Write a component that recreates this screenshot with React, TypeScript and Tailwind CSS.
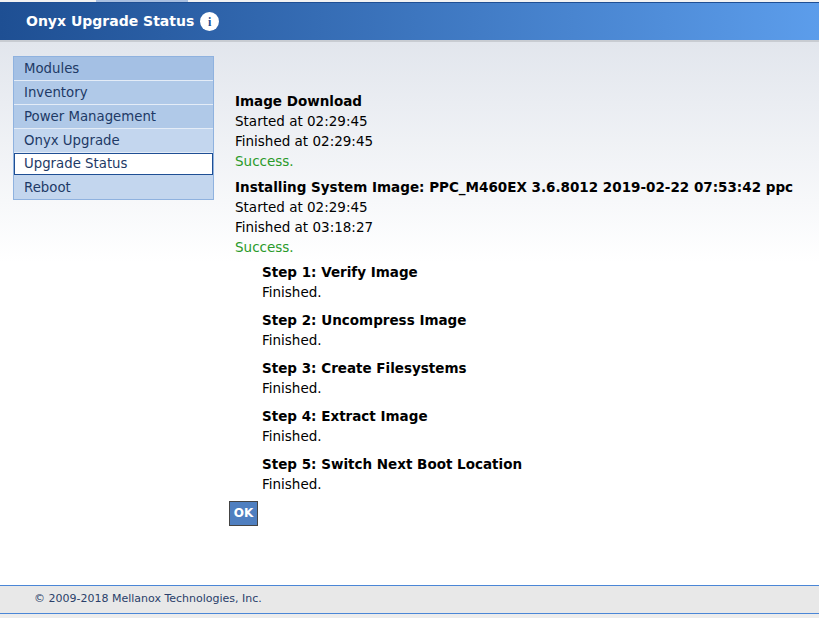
export default function App() {
  const menu = ["Modules", "Inventory", "Power Management", "Onyx Upgrade", "Upgrade Status", "Reboot"]
  const steps = ["Verify Image", "Uncompress Image", "Create Filesystems", "Extract Image", "Switch Next Boot Location"]
  return (
    <div className="w-[819px] h-[632px] bg-white text-[13px] text-black" style={{ fontFamily: '"DejaVu Sans", Verdana, sans-serif' }}>
      <div className="h-[3px] bg-[#f2f2f2] border-b border-[#1f4f94] flex">
        <div className="ml-[96px] w-[92px] bg-[#a9bfe0]" />
      </div>
      <div className="h-[37px] bg-gradient-to-r from-[#1e4f93] to-[#5c9deb] flex items-center pl-[26px] gap-[6px]">
        <span className="text-white font-bold text-[14px]">Onyx Upgrade Status</span>
        <span className="w-[19px] h-[19px] rounded-full bg-white text-[#1e4f93] flex items-center justify-center text-[12px] font-bold" style={{ fontFamily: '"Liberation Serif", serif' }}>i</span>
      </div>
      <div className="h-[2px] bg-[#c8ccd2]" />
      <div className="h-[543px] flex" style={{ backgroundImage: "linear-gradient(#e2e6ed, #ffffff 220px)" }}>
        <div className="ml-[13px] mt-[14px] w-[201px] self-start border border-[#8fb2df] bg-[#c3d6ee] text-[13.3px]">
          {menu.map((m, i) =>
            m === "Upgrade Status" ? (
              <div key={m} className="h-[22px] bg-white border border-[#1f4f94] text-[#1e3a66] pl-[9px] flex items-center">{m}</div>
            ) : (
              <div key={m} className={`h-[24px] pl-[10px] pt-[1px] flex items-center text-[#1e3a66] ${i < 5 ? "border-b border-[#e4ecf7]" : ""} ${i === 0 ? "bg-[#a4c0e4]" : i < 3 ? "bg-[#b0c9e8]" : "bg-[#c3d6ee]"}`}>{m}</div>
            )
          )}
        </div>
        <div className="ml-[21px] mt-[49px] leading-[20px] text-[13.5px]">
          <div className="font-bold">Image Download</div>
          <div>Started at 02:29:45</div>
          <div>Finished at 02:29:45</div>
          <div className="text-[#2a9a2a]">Success.</div>
          <div className="font-bold mt-[6px]">Installing System Image: PPC_M460EX 3.6.8012 2019-02-22 07:53:42 ppc</div>
          <div>Started at 02:29:45</div>
          <div>Finished at 03:18:27</div>
          <div className="text-[#2a9a2a]">Success.</div>
          <div className="pl-[27px] mt-[5px]">
            {steps.map((s, i) => (
              <div key={s} className="mb-[8px]">
                <div className="font-bold">Step {i + 1}: {s}</div>
                <div>Finished.</div>
              </div>
            ))}
          </div>
          <button className="-ml-[6px] -mt-[3px] w-[29px] h-[25px] bg-[#4f7fc0] border border-[#444] text-white font-bold text-[12px]">OK</button>
        </div>
      </div>
      <div className="h-[29px] bg-[#e8e8e8] border-t border-b border-[#4a86d6] flex items-center pl-[34px] text-[11px] text-[#2a3f6a]">
        © 2009-2018 Mellanox Technologies, Inc.
      </div>
      <div className="h-[4px] bg-[#ececec]" />
    </div>
  )
}
